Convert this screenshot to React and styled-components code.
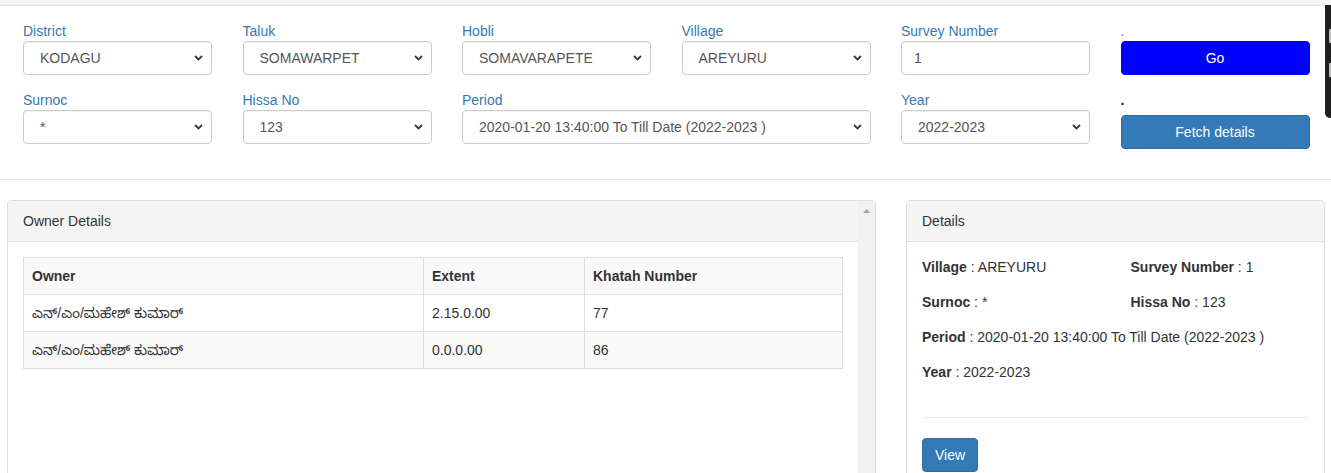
import React from "react";
import styled, { createGlobalStyle } from "styled-components";

const GlobalStyle = createGlobalStyle`
  html, body {
    margin: 0;
    padding: 0;
    overflow: hidden;
    background: #fff;
  }
  body {
    font-family: "Liberation Sans", Arial, "Noto Sans", sans-serif;
    font-size: 14px;
    line-height: 20px;
    color: #333;
  }
  * {
    box-sizing: border-box;
  }
`;

const TopStrip = styled.div`
  height: 6px;
  background: #f5f5f5;
  border-bottom: 1px solid #e3e3e3;
`;

//Form
const FormGrid = styled.div`
  display: grid;
  grid-template-columns: repeat(6, 189px);
  column-gap: 30.5px;
  row-gap: 15px;
  padding: 15px 21px 30px 23px;
  border-bottom: 1px solid #e5e5e5;
`;

const Field = styled.div`
  display: flex;
  flex-direction: column;
  grid-column: ${(p) => (p.$span ? `span ${p.$span}` : "auto")};
`;

const Label = styled.label`
  display: block;
  color: ${(p) => (p.$dark ? "#222" : "#3579b3")};
  font-weight: ${(p) => (p.$dark ? "bold" : "normal")};
  line-height: 20px;
  height: 20px;
`;

const SelectBox = styled.div`
  display: flex;
  align-items: center;
  justify-content: space-between;
  height: 34px;
  padding: 0 8px 0 16px;
  border: 1px solid #ccc;
  border-radius: 4px;
  color: #555;
  background: #fff;
  box-shadow: inset 0 1px 1px rgba(0, 0, 0, 0.05);
`;

const TextInput = styled.div`
  display: flex;
  align-items: center;
  height: 34px;
  padding: 0 12px;
  border: 1px solid #ccc;
  border-radius: 4px;
  color: #555;
  box-shadow: inset 0 1px 1px rgba(0, 0, 0, 0.05);
`;

const Btn = styled.button`
  height: 34px;
  width: 100%;
  margin-top: ${(p) => p.$offset || 0}px;
  border: 1px solid ${(p) => (p.$go ? "#0000ff" : "#2e6da4")};
  background: ${(p) => (p.$go ? "#0000ff" : "#337ab7")};
  color: #fff;
  font-family: inherit;
  font-size: 14px;
  border-radius: 4px;
  padding: 6px 12px;
  cursor: pointer;
`;

const Chevron = () => (
  <svg width="9" height="6" viewBox="0 0 9 6">
    <path d="M1 1 L4.5 4.5 L8 1" fill="none" stroke="#3a3a3a" strokeWidth="1.8" />
  </svg>
);

const Select = ({ value }) => (
  <SelectBox>
    <span>{value}</span>
    <Chevron />
  </SelectBox>
);

//Panels
const PanelRow = styled.div`
  display: grid;
  grid-template-columns: 869px 419px;
  column-gap: 30px;
  padding: 20px 6px 0 7px;
`;

const Panel = styled.div`
  border: 1px solid #ddd;
  border-radius: 4px;
  min-height: ${(p) => p.$minHeight || 0}px;
  display: flex;
  overflow: hidden;
  background: #fff;
`;

const PanelMain = styled.div`
  flex: 1;
  min-width: 0;
`;

const PanelHeading = styled.div`
  height: 41px;
  padding: 10px 15px;
  background: #f5f5f5;
  border-bottom: 1px solid #ddd;
`;

const PanelBody = styled.div`
  padding: 15px;
`;

const ScrollTrack = styled.div`
  width: 17px;
  background: #f1f1f1;
  display: flex;
  justify-content: center;
  padding-top: 8px;
`;

const Table = styled.table`
  width: 100%;
  border-collapse: collapse;
  border: 1px solid #ddd;
`;

const Th = styled.th`
  text-align: left;
  font-weight: bold;
  padding: 8px;
  border: 1px solid #ddd;
  width: ${(p) => p.$w || "auto"};
`;

const Tr = styled.tr`
  background: ${(p) => (p.$striped ? "#f9f9f9" : "#fff")};
`;

const Td = styled.td`
  padding: 8px;
  border: 1px solid #ddd;
  font-family: "Liberation Sans", Arial, "Noto Sans Kannada", "Noto Sans", sans-serif;
`;

const InfoGrid = styled.div`
  display: grid;
  grid-template-columns: 1fr 1fr;
  column-gap: 30px;
`;

const Info = styled.p`
  margin: 0 0 15px;
  line-height: 20px;
  grid-column: ${(p) => (p.$full ? "1 / -1" : "auto")};

  b {
    font-weight: bold;
  }
`;

const Divider = styled.hr`
  margin: 20px 0;
  border: 0;
  border-top: 1px solid #eee;
`;

const ViewBtn = styled.button`
  height: 34px;
  padding: 6px 12px;
  border: 1px solid #2e6da4;
  background: #337ab7;
  color: #fff;
  font-family: inherit;
  font-size: 14px;
  border-radius: 4px;
`;

// floating widget peeking in at the right edge
const SideDock = styled.div`
  position: fixed;
  top: 5px;
  right: 0;
  width: 6px;
  height: 113px;
  background: #1f1f1f;
  border-bottom-left-radius: 5px;
  display: flex;
  flex-direction: column;
  align-items: flex-end;
  gap: 20px;
  padding-top: 24px;
`;

const DockMark = styled.span`
  width: 2px;
  height: 14px;
  background: #bdbdbd;
`;

const owners = [
  { name: "ಎನ್/ಎಂ/ಮಹೇಶ್ ಕುಮಾರ್", extent: "2.15.0.00", khatah: "77" },
  { name: "ಎನ್/ಎಂ/ಮಹೇಶ್ ಕುಮಾರ್", extent: "0.0.0.00", khatah: "86" },
];

const App = () => {
  return (
    <>
      <GlobalStyle />
      <TopStrip />
      <FormGrid>
        <Field>
          <Label>District</Label>
          <Select value="KODAGU" />
        </Field>
        <Field>
          <Label>Taluk</Label>
          <Select value="SOMAWARPET" />
        </Field>
        <Field>
          <Label>Hobli</Label>
          <Select value="SOMAVARAPETE" />
        </Field>
        <Field>
          <Label>Village</Label>
          <Select value="AREYURU" />
        </Field>
        <Field>
          <Label>Survey Number</Label>
          <TextInput>1</TextInput>
        </Field>
        <Field>
          <Label>.</Label>
          <Btn $go>Go</Btn>
        </Field>

        <Field>
          <Label>Surnoc</Label>
          <Select value="*" />
        </Field>
        <Field>
          <Label>Hissa No</Label>
          <Select value="123" />
        </Field>
        <Field $span={2}>
          <Label>Period</Label>
          <Select value="2020-01-20 13:40:00 To Till Date (2022-2023 )" />
        </Field>
        <Field>
          <Label>Year</Label>
          <Select value="2022-2023" />
        </Field>
        <Field>
          <Label $dark>.</Label>
          <Btn $offset={5}>Fetch details</Btn>
        </Field>
      </FormGrid>

      <PanelRow>
        <Panel $minHeight={320}>
          <PanelMain>
            <PanelHeading>Owner Details</PanelHeading>
            <PanelBody>
              <Table>
                <thead>
                  <Tr $striped>
                    <Th $w="400px">Owner</Th>
                    <Th $w="161px">Extent</Th>
                    <Th>Khatah Number</Th>
                  </Tr>
                </thead>
                <tbody>
                  {owners.map((o, i) => (
                    <Tr key={i} $striped={i % 2 === 1}>
                      <Td>{o.name}</Td>
                      <Td>{o.extent}</Td>
                      <Td>{o.khatah}</Td>
                    </Tr>
                  ))}
                </tbody>
              </Table>
            </PanelBody>
          </PanelMain>
          <ScrollTrack>
            <svg width="7" height="4" viewBox="0 0 7 4">
              <path d="M0 4 L3.5 0 L7 4 Z" fill="#a3a3a3" />
            </svg>
          </ScrollTrack>
        </Panel>

        <Panel $minHeight={320}>
          <PanelMain>
            <PanelHeading>Details</PanelHeading>
            <PanelBody>
              <InfoGrid>
                <Info>
                  <b>Village</b> : AREYURU
                </Info>
                <Info>
                  <b>Survey Number</b> : 1
                </Info>
                <Info>
                  <b>Surnoc</b> : *
                </Info>
                <Info>
                  <b>Hissa No</b> : 123
                </Info>
                <Info $full>
                  <b>Period</b> : 2020-01-20 13:40:00 To Till Date (2022-2023 )
                </Info>
                <Info $full>
                  <b>Year</b> : 2022-2023
                </Info>
              </InfoGrid>
              <Divider />
              <ViewBtn>View</ViewBtn>
            </PanelBody>
          </PanelMain>
        </Panel>
      </PanelRow>

      <SideDock>
        <DockMark />
        <DockMark />
      </SideDock>
    </>
  );
};

export default App;
